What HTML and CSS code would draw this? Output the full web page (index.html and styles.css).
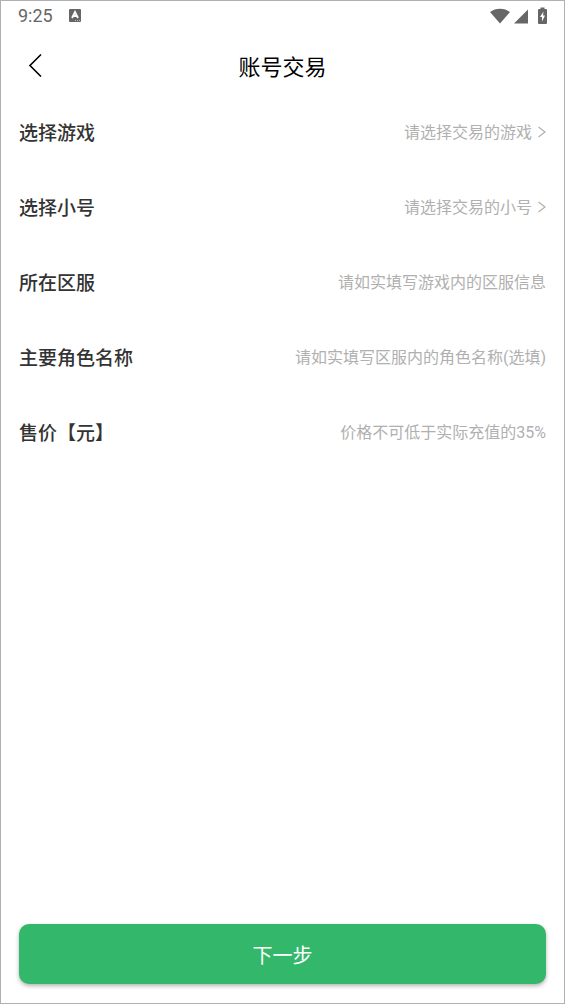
FILE: index.html
```html
<!DOCTYPE html>
<html lang="zh-CN">
<head>
  <meta charset="UTF-8">
  <meta name="viewport" content="width=device-width, initial-scale=1.0">
  <title>账号交易</title>
  <link rel="stylesheet" href="styles.css">
</head>
<body>
  <div class="page">
    <div class="status-bar">
      <div class="status-left">
        <span class="time">9:25</span>
        <svg class="status-app" width="12" height="13" viewBox="0 0 12 13">
          <rect width="12" height="13" rx="1" fill="#666"/>
          <path d="M3 9 L6 3 L9 9 M4 7 H8" fill="none" stroke="#fff" stroke-width="1.800"/>
          <path d="M6 11.500 H11" stroke="#bbb" stroke-width="1" stroke-dasharray="1 1"/>
        </svg>
      </div>
      <div class="status-right">
        <svg width="20" height="16" viewBox="0 0 20 16">
          <path d="M0 4 C5.500 -.5 14.500 -.5 20 4 L10 15.500 Z" fill="#666"/>
        </svg>
        <svg class="signal" width="14" height="16" viewBox="0 0 14 16">
          <path d="M14 1.500 V15.500 H0 Z" fill="#666"/>
        </svg>
        <svg width="9" height="18" viewBox="0 0 9 18">
          <path d="M1 2 H2.500 V.5 H6.500 V2 H8 Q9 2 9 3 V16 Q9 17 8 17 H1 Q0 17 0 16 V3 Q0 2 1 2 Z" fill="#666"/>
          <path d="M5.500 4.500 L2 10 H4 V14.500 L7 8.500 H5 Z" fill="#fff"/>
        </svg>
      </div>
    </div>

    <header class="header">
      <button type="button" class="back-button" aria-label="返回">
        <svg width="14" height="24" viewBox="0 0 14 24">
          <path d="M13 1.500 L2 12.500 L13 23.500" fill="none" stroke="#000" stroke-width="1.600"/>
        </svg>
      </button>
      <h1 class="title">账号交易</h1>
    </header>

    <form class="form">
      <div class="form-row">
        <label class="label" for="game">选择游戏</label>
        <select class="field select" id="game">
          <option value="">请选择交易的游戏</option>
        </select>
        <svg class="arrow" width="8" height="12" viewBox="0 0 8 12">
          <path d="M.5 1 L7 6 L.5 11" fill="none" stroke="#b0b0b0" stroke-width="1.200"/>
        </svg>
      </div>
      <div class="form-row">
        <label class="label" for="account">选择小号</label>
        <select class="field select" id="account">
          <option value="">请选择交易的小号</option>
        </select>
        <svg class="arrow" width="8" height="12" viewBox="0 0 8 12">
          <path d="M.5 1 L7 6 L.5 11" fill="none" stroke="#b0b0b0" stroke-width="1.200"/>
        </svg>
      </div>
      <div class="form-row">
        <label class="label" for="server">所在区服</label>
        <input type="text" class="field" id="server" placeholder="请如实填写游戏内的区服信息">
      </div>
      <div class="form-row">
        <label class="label" for="role">主要角色名称</label>
        <input type="text" class="field" id="role" placeholder="请如实填写区服内的角色名称(选填)">
      </div>
      <div class="form-row">
        <label class="label" for="price">售价【元】</label>
        <input type="text" class="field" id="price" placeholder="价格不可低于实际充值的35%">
      </div>

      <button type="submit" class="next-button">下一步</button>
    </form>
  </div>
</body>
</html>
```

FILE: styles.css
```css
* {
  box-sizing: border-box;
}

body {
  margin: 0;
  font-family: Roboto, "Noto Sans CJK SC", sans-serif;
  background-color: #fff;
}

.page {
  display: flex;
  flex-direction: column;
  min-height: 100vh;
  border: 1px solid #b0b0b0;
}

.status-bar {
  display: flex;
  justify-content: space-between;
  align-items: center;
  height: 29px;
  padding: 0 17px;
  color: #666;
}

.status-left,
.status-right {
  display: flex;
  align-items: center;
}

.status-left {
  gap: 16px;
}

.status-right {
  gap: 4px;
}

.signal {
  margin-right: 6px;
}

.time {
  font-size: 18px;
  line-height: 30px;
}

.header {
  display: grid;
  grid-template-columns: 40px 1fr 40px;
  align-items: center;
  height: 70px;
  padding: 0 14px;
}

.back-button {
  display: flex;
  justify-content: center;
  padding: 8px;
  border: none;
  background: none;
  cursor: pointer;
}

.title {
  margin: 0;
  font-family: "Noto Sans CJK SC", sans-serif;
  font-size: 22px;
  font-weight: 400;
  line-height: 32px;
  text-align: center;
  color: #000;
}

.form {
  display: flex;
  flex-direction: column;
  flex: 1;
  padding: 0 18px 19px;
}

.form-row {
  display: flex;
  align-items: center;
  height: 75px;
}

.form-row:first-child {
  margin-top: -6px;
}

.label {
  font-size: 19px;
  font-weight: 500;
  color: #333;
}

.field {
  flex: 1;
  min-width: 0;
  padding: 2px 0 0;
  border: none;
  outline: none;
  background: none;
  font-family: inherit;
  font-size: 16px;
  line-height: 24px;
  text-align: right;
  color: #333;
}

.field::placeholder {
  color: #b0b0b0;
}

.select {
  appearance: none;
  text-align-last: right;
  color: #b0b0b0;
  cursor: pointer;
}

.arrow {
  margin-left: 6px;
}

.next-button {
  height: 60px;
  margin-top: auto;
  border: none;
  border-radius: 10px;
  background-color: #33b76a;
  box-shadow: 0 2px 4px rgba(0, 0, 0, 0.3);
  font-family: inherit;
  font-size: 20px;
  color: #fff;
  cursor: pointer;
}
```
